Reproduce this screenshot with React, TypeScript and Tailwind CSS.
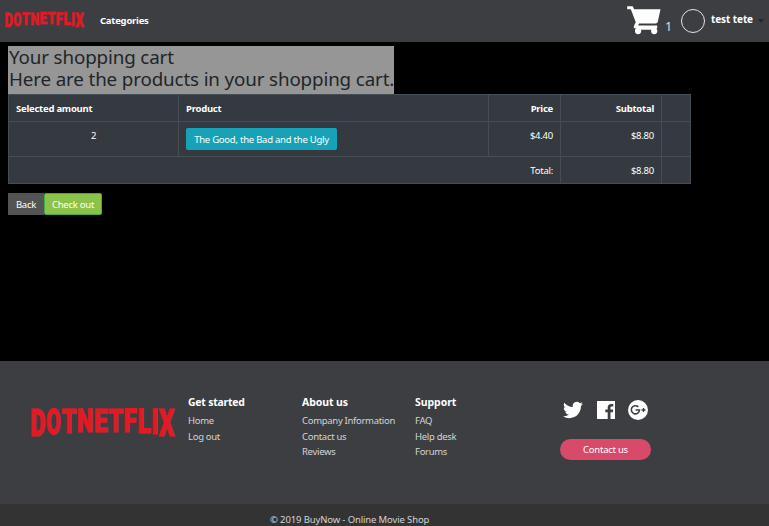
// letter, ink left, ink right, baseline, glyph bearing and ink width at 100 units
const LETTERS: [string, number, number, number, number, number][] = [
  ['D', 94, 136, 256, 4.8, 56.5],
  ['O', 140, 181, 251, 3.4, 61.5],
  ['T', 185, 229, 247, 1.6, 59.5],
  ['N', 233, 277.5, 245, 4.6, 60.5],
  ['E', 284.5, 323.5, 244, 4.6, 50],
  ['T', 325, 369, 244, 1.6, 59.5],
  ['F', 372.5, 409, 246, 4.6, 48],
  ['L', 414.5, 452, 249, 4.6, 48],
  ['I', 456, 471, 251, 6, 18],
  ['X', 475, 524, 256, 0.4, 64],
];

const STROKE = 3;

function Logo({ className }: { className: string }) {
  return (
    <svg
      viewBox="94 173 430 84"
      preserveAspectRatio="none"
      textRendering="geometricPrecision"
      className={`overflow-visible ${className}`}
      fill="#e01b26"
      stroke="#e01b26"
      strokeWidth={STROKE}
    >
      {LETTERS.map(([ch, left, right, base, bearing, ink], i) => {
        const sx = (right - left) / (ink + STROKE);
        const sy = (base - 173.5) / (71.1 + STROKE);
        const x = left - (bearing - STROKE / 2) * sx;
        const y = base - (STROKE / 2) * sy;
        return (
          <text
            key={i}
            transform={`translate(${x} ${y}) scale(${sx} ${sy})`}
            fontSize="100"
            className="font-['Roboto',sans-serif] font-black tracking-normal"
          >
            {ch}
          </text>
        );
      })}
    </svg>
  );
}

function Cart() {
  return (
    <svg viewBox="0 0 102 88" className="h-[29px] w-[34px]" fill="#fff">
      <path d="M0 1h15q3 0 4 4l2 5h80l-8 38q-1 5-7 5H36l-3 6h58v9H26q-9 0-5-9l5-10L11 10H0z" />
      <circle cx="33" cy="76" r="9.5" />
      <circle cx="82" cy="76" r="9.5" />
      <path d="M28 64h60v8H28z" />
    </svg>
  );
}

const COLUMNS = [
  { title: 'Get started', links: ['Home', 'Log out'], width: 'w-[114px]', size: 'text-[10.4px] tracking-[-0.2px]' },
  { title: 'About us', links: ['Company Information', 'Contact us', 'Reviews'], width: 'w-[113px]', size: 'text-[10.5px] tracking-[-0.1px]' },
  { title: 'Support', links: ['FAQ', 'Help desk', 'Forums'], width: 'w-[145px]', size: 'text-[10.5px] tracking-[-0.05px]' },
];

const CELL = 'border border-[#454d55] px-[7px] align-top';

export default function App() {
  return (
    <div className="flex h-[526px] w-[769px] flex-col overflow-hidden bg-black font-['Noto_Sans','Open_Sans',sans-serif] text-[9.5px] leading-[14px] tracking-[-0.24px] text-white">
      <header className="flex h-[42px] shrink-0 items-center bg-[#3d3e42]">
        <Logo className="mb-[3px] ml-[4.5px] h-[15px] w-[79px]" />
        <a className="ml-[16.5px] font-bold">Categories</a>
        <div className="ml-auto flex h-full items-start">
          <div className="mt-[6px]"><Cart /></div>
          <span className="ml-1 mt-5 w-[16px] text-[12.5px] text-[#dedede]">1</span>
          <span className="mt-[9px] size-6 rounded-full border border-[#e4e4e4]" />
          <b className="ml-[6px] mt-[12px] text-[10px] tracking-[-0.1px]">test tete</b>
          <span className="ml-[5px] mr-[5px] mt-[19px] border-x-[3.5px] border-t-[4px] border-x-transparent border-t-[#25272b]" />
        </div>
      </header>

      <main className="flex flex-1 flex-col items-start pl-2">
        <h2 className="mt-[4px] flex h-[48px] w-[386px] flex-col whitespace-nowrap bg-[#969696] pl-px text-[18.8px] leading-[22px] tracking-[-0.14px] text-[#212529]">
          <span>Your shopping cart</span>
          <span>Here are the products in your shopping cart.</span>
        </h2>
        <table className="w-[683px] table-fixed border-collapse bg-[#343a40]">
          <colgroup>
            <col className="w-[170px]" />
            <col className="w-[310px]" />
            <col className="w-[72px]" />
            <col className="w-[101px]" />
            <col />
          </colgroup>
          <thead>
            <tr className="h-[27px] text-left">
              <th className={`${CELL} pt-[7px]`}>Selected amount</th>
              <th className={`${CELL} pt-[7px]`}>Product</th>
              <th className={`${CELL} pt-[7px] text-right`}>Price</th>
              <th className={`${CELL} pt-[7px] text-right`}>Subtotal</th>
              <th className={CELL} />
            </tr>
          </thead>
          <tbody>
            <tr className="h-[35px]">
              <td className={`${CELL} pt-[7px] text-center`}>2</td>
              <td className={`${CELL} pt-[6px]`}>
                <button className="flex h-[22px] w-[151px] items-center justify-center whitespace-nowrap rounded-[2px] bg-[#17a2b8] pt-px">
                  The Good, the Bad and the Ugly
                </button>
              </td>
              <td className={`${CELL} pt-[7px] text-right`}>$4.40</td>
              <td className={`${CELL} pt-[7px] text-right`}>$8.80</td>
              <td className={CELL} />
            </tr>
            <tr className="h-[27px]">
              <td colSpan={3} className={`${CELL} pt-[7px] text-right`}>Total:</td>
              <td className={`${CELL} pt-[7px] text-right`}>$8.80</td>
              <td className={CELL} />
            </tr>
          </tbody>
        </table>
        <div className="mt-[9px] flex h-[22px]">
          <button className="w-[36px] bg-[#545454] pt-px">Back</button>
          <button className="w-[58px] rounded-[2px] border border-[#3fae49] bg-[#8bc34a] pt-px">Check out</button>
        </div>
      </main>

      <footer className="shrink-0">
        <div className="flex h-[143px] bg-[#3d3e42]">
          <Logo className="ml-[31px] mt-[46.5px] h-[28.500px] w-[144px]" />
          <div className="ml-[13px] mt-[34px] flex">
            {COLUMNS.map((c) => (
              <div key={c.title} className={c.width}>
                <h5 className={`mb-[3px] font-bold leading-[15px] ${c.size}`}>{c.title}</h5>
                <ul className="leading-[15.5px] tracking-[-0.3px] text-[#d4d4d4]">
                  {c.links.map((l) => <li key={l}>{l}</li>)}
                </ul>
              </div>
            ))}
          </div>
          <div className="mt-[39px]">
            <div className="flex items-center pl-[3px]">
              <svg viewBox="0 0 24 24" className="size-[20px]" fill="#fff">
                <path d="M23.95 4.57a10 10 0 0 1-2.82.77 4.96 4.96 0 0 0 2.16-2.72c-.95.55-2 .95-3.13 1.18a4.92 4.92 0 0 0-8.38 4.48C7.69 8.1 4.07 6.13 1.64 3.16a4.82 4.82 0 0 0-.67 2.48c0 1.71.87 3.21 2.19 4.1a4.9 4.9 0 0 1-2.23-.62v.06a4.92 4.92 0 0 0 3.95 4.83 5 5 0 0 1-2.21.08 4.94 4.94 0 0 0 4.6 3.42A9.87 9.87 0 0 1 0 19.54a14 14 0 0 0 7.55 2.21c9.05 0 14-7.5 14-13.98 0-.21 0-.42-.02-.63a9.94 9.94 0 0 0 2.42-2.57z" />
              </svg>
              <svg viewBox="0 0 18 18" className="ml-[14px] size-[18px]" fill="#fff">
                <path d="M0 0h18v18h-4.500v-6.800h2.300l.4-2.700h-2.700V6.800c0-.8.3-1.300 1.400-1.300h1.400V3.100c-.3 0-1.100-.1-2.100-.1-2.100 0-3.500 1.200-3.500 3.500v2H8.300v2.700h2.400V18H0z" />
              </svg>
              <svg viewBox="0 0 20 20" className="ml-[13px] size-[20px]">
                <circle cx="10" cy="10" r="10" fill="#fff" />
                <path d="M10.300 6.900A4.100 4.100 0 1 0 11.500 10H7.600" fill="none" stroke="#3d3e42" strokeWidth="1.600" />
                <path d="M15.500 8v4M13.500 10h4" stroke="#3d3e42" strokeWidth="1.400" />
              </svg>
            </div>
            <button className="mt-[19px] flex h-[21px] w-[91px] items-center justify-center rounded-full bg-[#d94a6a]">
              Contact us
            </button>
          </div>
        </div>
        <div className="h-[22px] bg-[#333] pl-[270px] pt-[9px] leading-[13px] tracking-[-0.13px] text-[#d4d4d4]">
          © 2019 BuyNow - Online Movie Shop
        </div>
      </footer>
    </div>
  );
}
